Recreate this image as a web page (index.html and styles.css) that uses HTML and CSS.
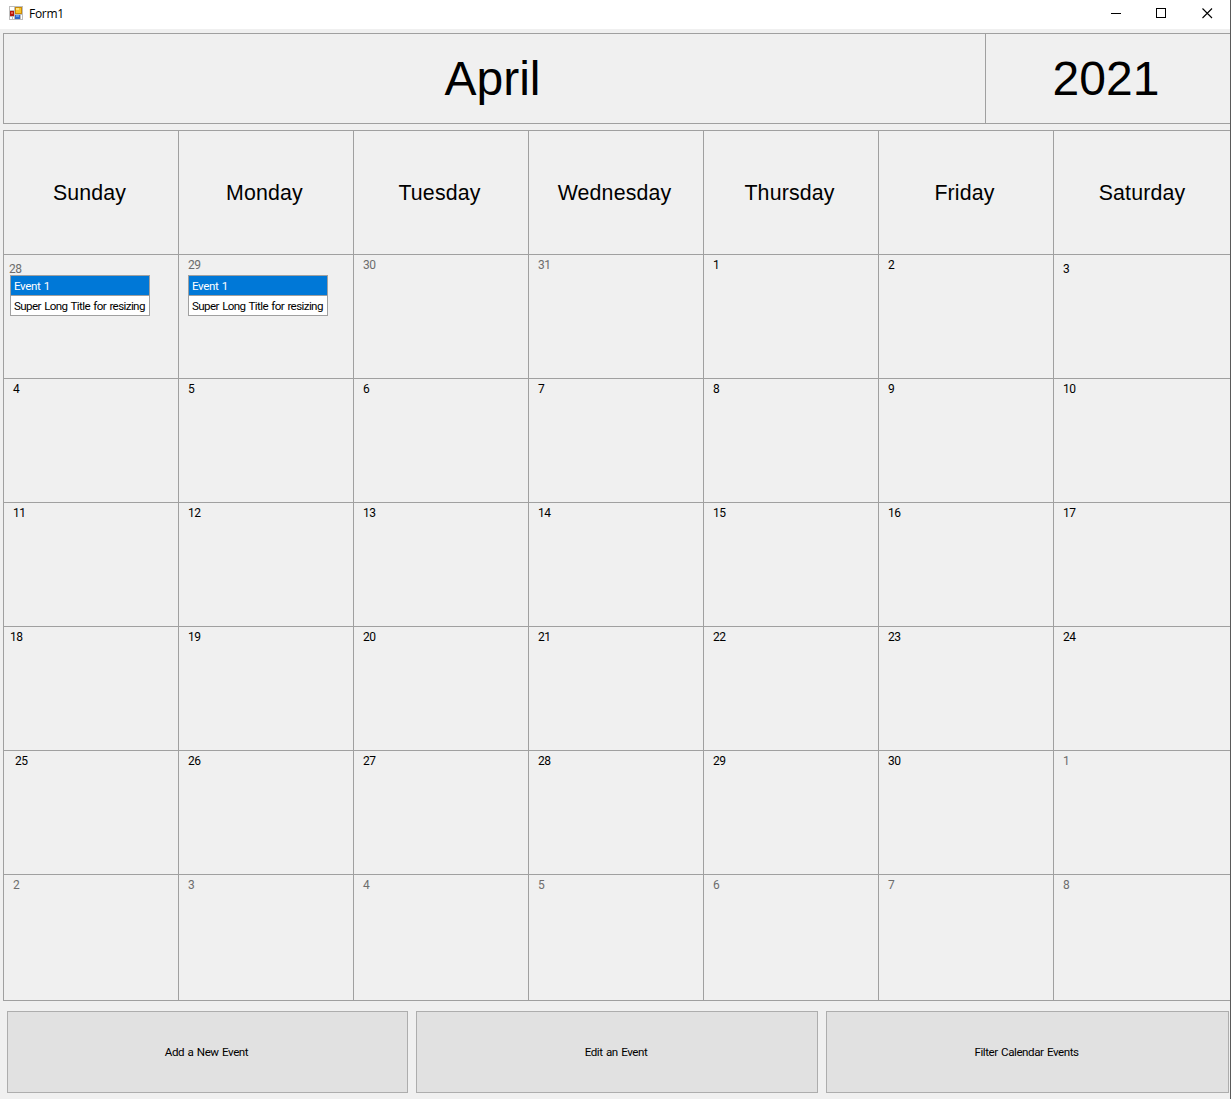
FILE: index.html
```
<!DOCTYPE html>
<html lang="en">
<head>
<meta charset="utf-8">
<title>Form1</title>
<link rel="stylesheet" href="styles.css">
</head>
<body>
<div class="window">
  <header class="titlebar">
    <svg class="app-icon" width="14" height="14" viewBox="0 0 14 14" shape-rendering="crispEdges">
      <rect width="14" height="14" fill="#bdbdbd"/>
      <rect x="1" y="1" width="4" height="3" fill="#fff"/>
      <rect x="1" y="5" width="4" height="5" fill="#b5170b"/>
      <rect x="2" y="6" width="2" height="2" fill="#e8604c"/>
      <rect x="1" y="11" width="2" height="2" fill="#fff"/>
      <rect x="4" y="11" width="1" height="2" fill="#fff"/>
      <rect x="6" y="1" width="7" height="7" fill="#c98a08"/>
      <rect x="7" y="2" width="5" height="5" fill="#f7c42b"/>
      <rect x="7" y="2" width="3" height="2" fill="#ffe480"/>
      <rect x="6" y="9" width="5" height="4" fill="#2f66c4"/>
      <rect x="7" y="9" width="3" height="2" fill="#5f97e8"/>
      <rect x="12" y="9" width="1" height="4" fill="#fff"/>
    </svg>
    <span class="caption">Form1</span>
    <svg class="controls" width="102" height="11" viewBox="0 0 102 11" fill="none" stroke="#000">
      <path d="M0 5.500H10M45.500 .5h9v9h-9z" shape-rendering="crispEdges"/>
      <path d="M91.500 .5l9.500 9.500M101 .5l-9.500 9.500" stroke-width="1.100"/>
    </svg>
  </header>
  <section class="heading">
    <div class="month">April</div>
    <div class="year">2021</div>
  </section>
  <main class="calendar">
    <div class="weekday">Sunday</div><div class="weekday">Monday</div><div class="weekday">Tuesday</div><div class="weekday">Wednesday</div><div class="weekday">Thursday</div><div class="weekday">Friday</div><div class="weekday">Saturday</div>

    <div class="day muted low shift-5"><span>28</span><ul class="events"><li class="selected">Event 1</li><li>Super Long Title for resizing</li></ul></div>
    <div class="day muted"><span>29</span><ul class="events"><li class="selected">Event 1</li><li>Super Long Title for resizing</li></ul></div>
    <div class="day muted"><span>30</span></div><div class="day muted"><span>31</span></div><div class="day"><span>1</span></div><div class="day"><span>2</span></div><div class="day low"><span>3</span></div>

    <div class="day"><span>4</span></div><div class="day"><span>5</span></div><div class="day"><span>6</span></div><div class="day"><span>7</span></div><div class="day"><span>8</span></div><div class="day"><span>9</span></div><div class="day"><span>10</span></div>

    <div class="day"><span>11</span></div><div class="day"><span>12</span></div><div class="day"><span>13</span></div><div class="day"><span>14</span></div><div class="day"><span>15</span></div><div class="day"><span>16</span></div><div class="day"><span>17</span></div>

    <div class="day shift-6"><span>18</span></div><div class="day"><span>19</span></div><div class="day"><span>20</span></div><div class="day"><span>21</span></div><div class="day"><span>22</span></div><div class="day"><span>23</span></div><div class="day"><span>24</span></div>

    <div class="day shift-11"><span>25</span></div><div class="day"><span>26</span></div><div class="day"><span>27</span></div><div class="day"><span>28</span></div><div class="day"><span>29</span></div><div class="day"><span>30</span></div><div class="day muted"><span>1</span></div>

    <div class="day muted"><span>2</span></div><div class="day muted"><span>3</span></div><div class="day muted"><span>4</span></div><div class="day muted"><span>5</span></div><div class="day muted"><span>6</span></div><div class="day muted"><span>7</span></div><div class="day muted"><span>8</span></div>
  </main>
  <footer class="actions">
    <button class="action">Add a New Event</button>
    <button class="action">Edit an Event</button>
    <button class="action">Filter Calendar Events</button>
  </footer>
</div>
</body>
</html>
```
FILE: styles.css
```
* { box-sizing: border-box; }
body {
  margin: 0;
  overflow: hidden;
  background: #f0f0f0;
  color: #000;
  font: 12px/14px Roboto, "Liberation Sans", sans-serif;
  letter-spacing: -0.6px;
}
.window {
  width: 1231px;
  height: 1099px;
  border-right: 1px solid #5a5a5a;
  overflow: hidden;
}
.titlebar {
  height: 29px;
  background: #fff;
  display: flex;
  align-items: flex-start;
  padding: 6px 17px 0 9px;
}
.caption {
  font: 12px/16px "Open Sans", sans-serif;
  letter-spacing: -0.3px;
  margin-left: 6px;
}
.controls { margin: 2px 0 0 auto; }
.heading {
  display: grid;
  grid-template-columns: 982px 1fr;
  height: 91px;
  margin: 4px 0 0 3px;
  border: 1px solid #a0a0a0;
  border-width: 1px 0 1px 1px;
  font: 48px/89px "Liberation Sans", Arial, sans-serif;
  letter-spacing: 0;
  text-align: center;
}
.month { border-right: 1px solid #a0a0a0; padding-right: 4px; }
.year { padding-right: 4px; }
.calendar {
  display: grid;
  grid-template-columns: repeat(6, 175px) 177px;
  grid-template-rows: repeat(6, 124px) 126px;
  height: 871px;
  margin: 6px 0 0 3px;
  border-bottom: 1px solid #a0a0a0;
}
.weekday, .day {
  border-left: 1px solid #a0a0a0;
  border-top: 1px solid #a0a0a0;
}
.weekday {
  font: 21.33px/124px "Liberation Sans", Arial, sans-serif;
  letter-spacing: 0.15px;
  text-align: center;
  padding-right: 3px;
}
.weekday:nth-child(7) { padding-right: 0; }
.day { padding: 3px 0 0 9px; }
.day > span { display: block; }
.muted { color: #6d6d6d; }
.low { padding-top: 7px; }
.shift-5 { padding-left: 5px; }
.shift-6 { padding-left: 6px; }
.shift-11 { padding-left: 11px; }
.events {
  width: 140px;
  height: 41px;
  margin: 3px 0 0;
  padding: 0;
  list-style: none;
  background: #fff;
  border: 1px solid #a0a0a0;
  color: #000;
  font-size: 11.6px;
  letter-spacing: -0.6px;
  word-spacing: 1px;
}
.low .events { margin: -1px 0 0 1px; }
.events li {
  height: 20px;
  padding-left: 3px;
  line-height: 20px;
  white-space: nowrap;
}
.events .selected {
  background: #0078d7;
  color: #fff;
  border-bottom: 1px solid #a0a0a0;
  letter-spacing: -0.4px;
}
.actions {
  display: grid;
  grid-template-columns: 401px 402px 403px;
  column-gap: 8px;
  height: 82px;
  margin: 10px 0 0 7px;
}
.action {
  padding: 0 2px 0 0;
  border: 1px solid #adadad;
  background: #e1e1e1;
  color: #000;
  font: inherit;
  font-size: 11.6px;
  letter-spacing: -0.45px;
  word-spacing: 1px;
}
```
